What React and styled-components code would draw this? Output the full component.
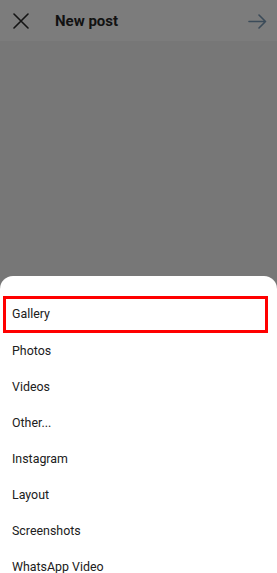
import styled, { createGlobalStyle } from 'styled-components'

const GlobalStyle = createGlobalStyle`
  html, body {
    margin: 0;
    padding: 0;
  }
  body {
    font-family: Roboto, "Noto Sans", Arial, sans-serif;
    background: #777777;
  }
`

const folders = ['Gallery', 'Photos', 'Videos', 'Other...', 'Instagram', 'Layout', 'Screenshots', 'WhatsApp Video']

const App = () => {
  return (
    <Screen>
      <GlobalStyle />
      <Header>
        <IconButton aria-label="close">
          <svg width="16" height="16" viewBox="0 0 16 16">
            <path d="M1 1 L15 15 M15 1 L1 15" stroke="#141414" strokeWidth="1.6" strokeLinecap="round" />
          </svg>
        </IconButton>
        <Title>New post</Title>
        <NextButton aria-label="next">
          <svg width="19" height="15" viewBox="0 0 19 15">
            <path d="M1 7.5 H17.5 M11 1 L17.5 7.5 L11 14" stroke="#3b4b59" strokeWidth="1.6" fill="none" strokeLinecap="round" strokeLinejoin="round" />
          </svg>
        </NextButton>
      </Header>
      <Backdrop />
      <Sheet>
        <Handle />
        <FolderList>
          {folders.map((name, i) => (
            <FolderRow key={name} selected={i === 0}>{name}</FolderRow>
          ))}
        </FolderList>
      </Sheet>
    </Screen>
  )
}

const Screen = styled.div`
  width: 277px;
  height: 573px;
  display: flex;
  flex-direction: column;
  overflow: hidden;
  background: #777777;
`

const Header = styled.div`
  height: 41px;
  flex-shrink: 0;
  display: flex;
  align-items: center;
  background: #7c7c7c;
  padding: 0 10px 0 13px;
`

const IconButton = styled.div`
  width: 16px;
  height: 16px;
  display: flex;
  margin-top: 1px;
`

const Title = styled.h1`
  margin: 0 0 0 26px;
  font-size: 15px;
  font-weight: 700;
  color: #121212;
  flex: 1;
`

const NextButton = styled.div`
  display: flex;
  margin-top: 1px;
`

const Backdrop = styled.div`
  flex: 1;
`

const Sheet = styled.div`
  height: 297px;
  flex-shrink: 0;
  background: #ffffff;
  border-radius: 13px 13px 0 0;
  display: flex;
  flex-direction: column;
  align-items: stretch;
`

const Handle = styled.div`
  width: 27px;
  height: 3px;
  border-radius: 2px;
  background: #737373;
  margin: 9px auto 11px;
`

const FolderList = styled.ul`
  list-style: none;
  margin: 0;
  padding: 0;
`

const FolderRow = styled.li`
  height: ${props => props.selected ? '37px' : '36px'};
  box-sizing: border-box;
  display: flex;
  align-items: center;
  font-size: 12.4px;
  color: #202020;
  padding-left: ${props => props.selected ? '6px' : '12px'};
  padding-bottom: 2px;
  margin: ${props => props.selected ? '0 9px 0 3px' : '0'};
  border: ${props => props.selected ? '3px solid #ff0000' : 'none'};
`

export default App
